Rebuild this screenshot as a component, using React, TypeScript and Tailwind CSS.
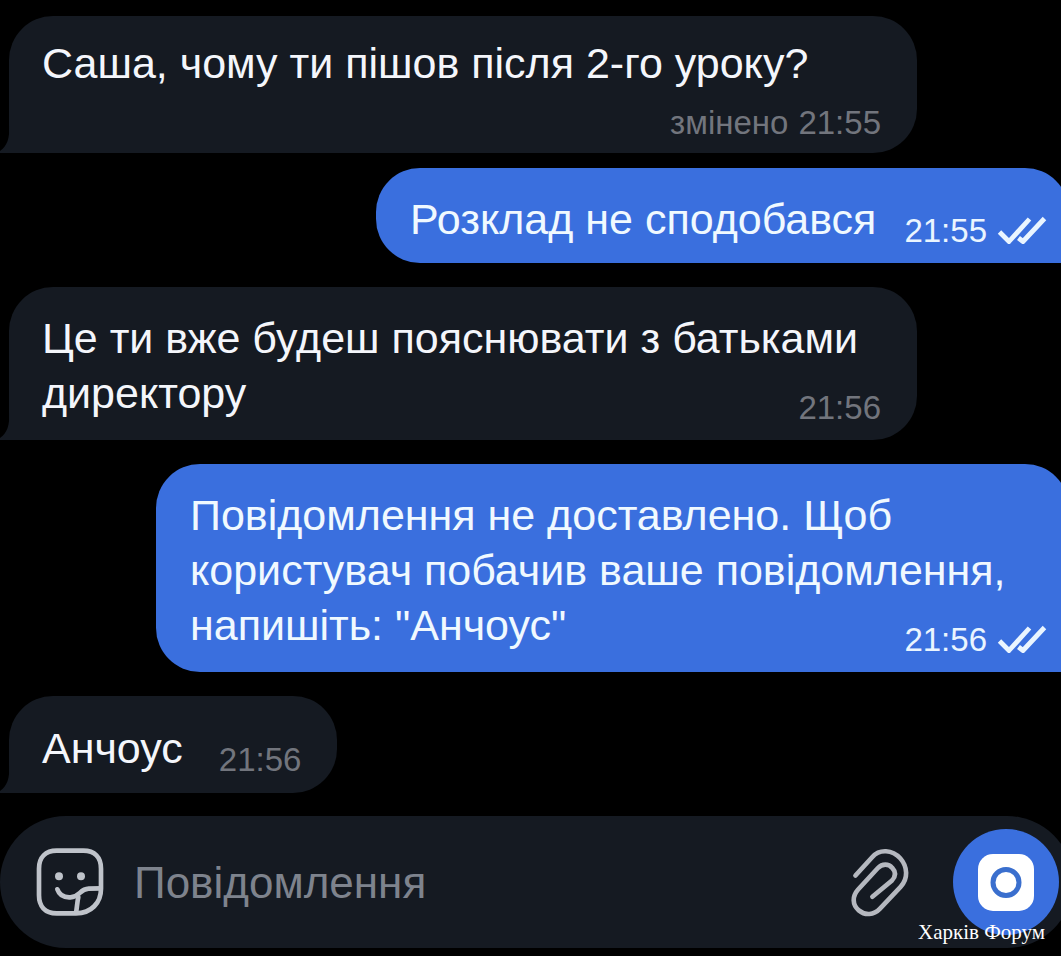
import type { ReactNode } from "react";

function Tail() {
  return (
    <svg
      className="absolute bottom-0 -left-[9px] text-[#151a22]"
      width="40"
      height="27"
      viewBox="0 0 40 27"
      fill="currentColor"
      aria-hidden="true"
    >
      <path d="M9 0C10 12 7 20 0 25V27H40V0Z" />
    </svg>
  );
}

function Checks() {
  return (
    <svg
      width="50"
      height="30"
      viewBox="0 0 50 30"
      fill="none"
      stroke="currentColor"
      strokeWidth="4.8"
      strokeLinejoin="round"
      role="img"
      aria-label="Прочитано"
    >
      <path d="M2.500 16L12 25.500L32.500 3" />
      <path d="M21.500 22L26 25.500L47.500 2.500" />
    </svg>
  );
}

function Incoming({ children, className }: { children: ReactNode; className: string }) {
  return (
    <article
      className={`relative ml-[9px] max-w-[908px] rounded-[44px] rounded-bl-none bg-[#151a22] pr-9 pl-[33px] text-[#f4f6fb] ${className}`}
    >
      <Tail />
      {children}
    </article>
  );
}

function Outgoing({ children, className }: { children: ReactNode; className: string }) {
  return (
    <article
      className={`-mr-2 ml-auto w-fit max-w-[913px] rounded-[44px] rounded-br-none bg-[#3a6fde] pr-[22px] pl-[34px] text-[#f0f9ff] ${className}`}
    >
      {children}
    </article>
  );
}

function Stamp({ time, edited, read }: { time: string; edited?: boolean; read?: boolean }) {
  return (
    <span
      className={`flex items-center justify-end gap-[10px] text-[33px] leading-10 whitespace-nowrap ${
        read ? "text-[#eaf5ff]" : "text-[#72757d]"
      }`}
    >
      {edited && <span>змінено</span>}
      <time>{time}</time>
      {read && <Checks />}
    </span>
  );
}

function StickerIcon() {
  return (
    <svg width="68" height="68" viewBox="0 0 204 204" fill="none" stroke="currentColor" strokeWidth="14" strokeLinecap="round" aria-hidden="true">
      <path d="M120 196H62C26 196 9 174 9 142V62C9 28 29 8 62 8H142C176 8 195 28 195 62V122C195 164 166 196 120 196Z" />
      <path d="M64 124C70 142 84 149 103 148C133 147 130 123 158 122L193 121" />
      <path d="M120 194C123 180 123 165 127 147" />
      <circle cx="69" cy="85" r="12" fill="currentColor" stroke="none" />
      <circle cx="135" cy="85" r="12" fill="currentColor" stroke="none" />
    </svg>
  );
}

function ClipIcon() {
  return (
    <svg width="58" height="69" viewBox="0 0 174 208" fill="none" stroke="currentColor" strokeWidth="14" strokeLinecap="round" aria-hidden="true">
      <path d="M13 83L64 27C86 2 124 5 148 31C171 57 172 93 149 117L87 183C68 203 42 204 23 188C3 171 3 145 21 125L80 61C94 46 113 47 124 60C136 73 134 86 123 98L64 147" />
    </svg>
  );
}

function CameraIcon() {
  return (
    <svg width="56" height="57" viewBox="0 0 56 57" aria-hidden="true">
      <rect width="56" height="57" rx="15" fill="#fff" />
      <circle cx="28" cy="28.500" r="13" fill="none" stroke="#3a6fce" strokeWidth="5" />
    </svg>
  );
}

export default function App() {
  return (
    <main className="relative flex min-h-screen flex-col overflow-hidden bg-black pt-4 pb-2 font-['Liberation_Sans',Arial,sans-serif] text-[43px] leading-[55px]">
      <Incoming className="w-full pt-5 pb-2.5">
        <p>Саша, чому ти пішов після 2-го уроку?</p>
        <div className="pt-3">
          <Stamp time="21:55" edited />
        </div>
      </Incoming>

      <Outgoing className="mt-[15px] flex items-end gap-7 pt-6 pb-3">
        <p className="pb-1">Розклад не сподобався</p>
        <Stamp time="21:55" read />
      </Outgoing>

      <Incoming className="mt-6 flow-root w-full pt-6 pb-3">
        <p>
          Це ти вже будеш пояснювати з батьками директору
          <span className="float-right mt-[22px]">
            <Stamp time="21:56" />
          </span>
        </p>
      </Incoming>

      <Outgoing className="mt-6 flow-root pt-6 pb-3">
        <p>
          Повідомлення не доставлено. Щоб користувач побачив ваше повідомлення, напишіть: "Анчоус"
          <span className="float-right mt-[22px]">
            <Stamp time="21:56" read />
          </span>
        </p>
      </Outgoing>

      <Incoming className="mt-6 flex w-fit items-end gap-9 pt-[25px] pb-[13px]">
        <p className="pb-1">Анчоус</p>
        <Stamp time="21:56" />
      </Incoming>

      <form
        className="mt-[23px] -mr-3 flex h-[132px] items-center rounded-full bg-[#151a22] pr-[14px] pl-9"
        onSubmit={(event) => event.preventDefault()}
      >
        <button type="button" aria-label="Стікери" className="text-[#bfc3ca]">
          <StickerIcon />
        </button>
        <input
          type="text"
          aria-label="Повідомлення"
          placeholder="Повідомлення"
          className="mx-[30px] min-w-0 flex-1 bg-transparent text-[44px] text-white outline-none placeholder:text-[#7e838d]"
        />
        <button type="button" aria-label="Прикріпити файл" className="mr-11 text-[#b5b8bf]">
          <ClipIcon />
        </button>
        <button
          type="button"
          aria-label="Камера"
          className="flex size-[106px] items-center justify-center rounded-full bg-[#3a6fde]"
        >
          <CameraIcon />
        </button>
      </form>

      <span className="absolute right-4 bottom-2 font-['Liberation_Serif',serif] text-[21px] leading-8 text-white">
        Харків Форум
      </span>
    </main>
  );
}
